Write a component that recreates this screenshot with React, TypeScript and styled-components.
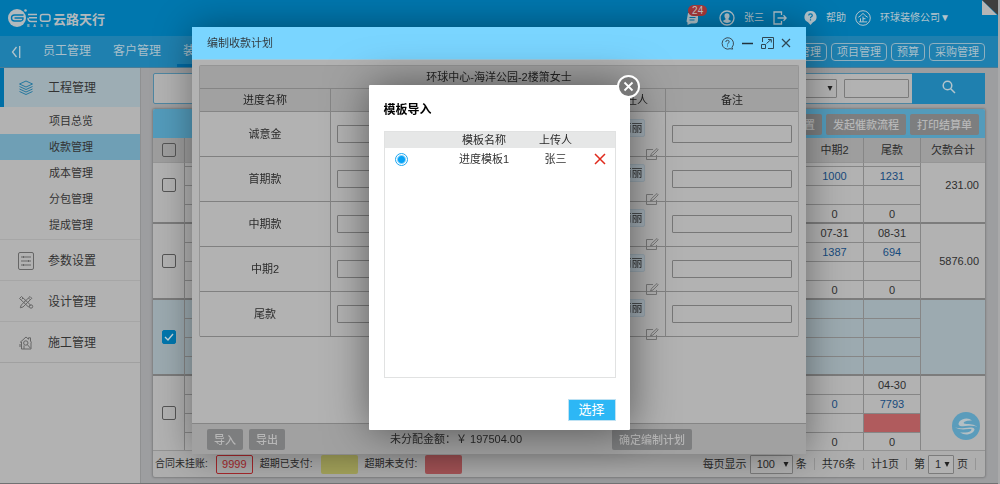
import React, { useLayoutEffect, useRef } from "react";
import styled, { createGlobalStyle } from "styled-components";

const Global = createGlobalStyle`
  *, *::before, *::after { box-sizing: border-box; }
  body {
    margin: 0;
    background: #a9a9aa;
    font-family: "Liberation Sans", "Noto Sans CJK SC", sans-serif;
    font-size: 11px;
    line-height: 16px;
    color: #2b2b2b;
  }
  button, input, select { font: inherit; color: inherit; margin: 0; }
  button { cursor: pointer; }
  a { color: inherit; text-decoration: none; }
  table { border-spacing: 0; border-collapse: separate; }
  th, td { padding: 0; font-weight: 400; }
`;

const Shell = styled.div`
  position: relative;
  display: flex;
  flex-direction: column;
  height: 100vh;
  margin-right: 2px;
  overflow: hidden;
  background: #9d9ea0;
  border-bottom: 1px solid #707172;
`;

/* ---------- top bar ---------- */
const TopBar = styled.header`
  display: flex;
  align-items: center;
  justify-content: space-between;
  flex: none;
  height: 36px;
  padding: 0 48px 0 8px;
  background: #0077ae;
  color: #b3c4cc;
  font-size: 10px;
`;
const Brand = styled.a`
  display: flex;
  align-items: center;
  gap: 2px;
  font-size: 13px;
  font-weight: 700;
  color: #b2b9bd;
`;
const BrandName = styled.span`
  padding-top: 4px;
`;
const UserTools = styled.div`
  display: flex;
  align-items: center;
  gap: 9px;
`;
const ToolButton = styled.button<{ $iconOnly?: boolean }>`
  position: relative;
  display: flex;
  align-items: center;
  gap: 9px;
  padding: 0;
  border: 0;
  background: none;
  margin-right: ${(p) => (p.$iconOnly ? 8 : 0)}px;
`;
const Badge = styled.span`
  position: absolute;
  left: 2px;
  top: -7px;
  padding: 0 4px;
  border-radius: 6px;
  background: #a83a3c;
  color: #c9c9c9;
  font-size: 10px;
  line-height: 11px;
`;
const Corner = styled.svg`
  position: absolute;
  top: 0;
  right: 0;
`;

/* ---------- navigation ---------- */
const NavBar = styled.nav`
  display: flex;
  align-items: center;
  flex: none;
  height: 32px;
  padding: 0 13px 0 11px;
  background: #1f80af;
  color: #a9bfca;
  border-bottom: 1px solid #4a7d97;
`;
const Collapse = styled.button`
  display: flex;
  padding: 0;
  border: 0;
  margin-right: 16px;
  background: none;
`;
const NavLinks = styled.div`
  display: flex;
  flex: 1;
  gap: 10px;
  height: 100%;
`;
const NavLink = styled.a<{ $active?: boolean }>`
  padding: 0 6px;
  font-size: 12px;
  line-height: 30px;
  border-bottom: 3px solid ${(p) => (p.$active ? "#0069a3" : "transparent")};
`;
const Pills = styled.div`
  display: flex;
  gap: 4px;
`;
const Pill = styled.button`
  height: 18px;
  padding: 0 5px;
  border: 1px solid #8fb0c0;
  border-radius: 4px;
  background: none;
  line-height: 16px;
`;

/* ---------- page body ---------- */
const Body = styled.div`
  display: flex;
  flex: 1;
  min-height: 0;
`;
const Side = styled.aside`
  flex: none;
  width: 141px;
  background: #b2b2b2;
  border-right: 1px solid #8f9091;
  color: #333;
`;
const SideGroup = styled.a<{ $open?: boolean }>`
  display: flex;
  align-items: center;
  gap: 14px;
  height: ${(p) => (p.$open ? 39 : 41)}px;
  padding-left: ${(p) => (p.$open ? 14 : 18)}px;
  padding-top: ${(p) => (p.$open ? 0 : 2)}px;
  border-left: ${(p) => (p.$open ? "4px solid #006fa6" : "0")};
  border-top: ${(p) => (p.$open ? "0" : "1px solid #a6a6a6")};
  background: ${(p) => (p.$open ? "#9dadb4" : "none")};
  font-size: 12px;
`;
const SideList = styled.div`
  padding: 1px 0;
`;
const SideItem = styled.a<{ $active?: boolean }>`
  display: block;
  padding-left: 49px;
  line-height: 26px;
  background: ${(p) => (p.$active ? "#6f9fb5" : "none")};
`;
const SideEnd = styled.div`
  border-top: 1px solid #a0a0a0;
`;
const Content = styled.main`
  display: flex;
  flex-direction: column;
  gap: 5px;
  flex: 1;
  min-width: 0;
  padding: 5px 13px 6px 12px;
`;
const SearchBar = styled.form`
  display: flex;
  align-items: center;
  justify-content: flex-end;
  flex: none;
  gap: 7px;
  height: 31px;
  padding-left: 8px;
  border: 1px solid #4f86a1;
  border-radius: 2px;
  background: #b2b2b2;
`;
const SelectBox = styled.label<{ $w: number }>`
  position: relative;
  display: flex;
  width: ${(p) => p.$w}px;
  height: 19px;
`;
const Select = styled.select`
  appearance: none;
  width: 100%;
  padding: 0 0 0 6px;
  border: 1px solid #7b7b7b;
  border-radius: 1px;
  background: #b2b2b2;
`;
const Arrow = styled.svg`
  position: absolute;
  right: 4px;
  top: 7px;
  pointer-events: none;
`;
const SearchInput = styled.input`
  width: 65px;
  height: 19px;
  border: 1px solid #7b7b7b;
  border-radius: 1px;
  background: #b2b2b2;
`;
const SearchButton = styled.button`
  display: flex;
  align-items: center;
  justify-content: center;
  align-self: stretch;
  width: 73px;
  padding: 0 0 4px;
  margin: -1px -1px -1px -4px;
  border: 0;
  background: #1f80af;
`;
const Card = styled.section`
  display: flex;
  flex-direction: column;
  flex: 1;
  min-height: 0;
  border-radius: 2px;
  background: #aeaeae;
  box-shadow: 0 0 2px 1px rgba(0, 0, 0, 0.2);
`;
const Actions = styled.div`
  display: flex;
  align-items: center;
  justify-content: flex-end;
  flex: none;
  gap: 4px;
  height: 29px;
  padding: 2px 6px 0 0;
  background: #539bbb;
  border-radius: 2px 2px 0 0;
`;
const GreyButton = styled.button`
  height: 21px;
  padding: 0 7px;
  border: 0;
  border-radius: 2px;
  background: #7d7e7f;
  color: #b7b7b7;
  line-height: 22px;
  font-weight: 500;
`;
const GridTable = styled.table`
  width: 100%;
  table-layout: fixed;
  background: #b2b2b2;
`;
const HeadCell = styled.th`
  height: 25px;
  background: #9e9e9e;
  border-right: 1px solid #868686;
  border-bottom: 1px solid #969696;
  text-align: center;
  &:last-child { border-right: 0; }
`;
const ScrollPane = styled.div`
  flex: 1;
  min-height: 0;
  overflow-y: auto;
  scrollbar-width: none;
`;
const Cell = styled.td<{ $last?: boolean; $tone?: Tone; $shade?: boolean }>`
  height: 19px;
  border-right: 1px solid #868686;
  border-bottom: ${(p) => (p.$last ? "2px solid #7c7c7c" : "1px solid #868686")};
  background: ${(p) => (p.$tone === "due" ? "#b05b5d" : p.$shade ? "#9caab0" : "#b2b2b2")};
  color: ${(p) => (p.$tone === "link" ? "#164a7c" : "#2e2e2e")};
  text-align: center;
  line-height: 16px;
`;
const TotalCell = styled(Cell)`
  padding-right: 6px;
  border-right: 0;
  text-align: right;
`;
const Check = styled.input`
  appearance: none;
  display: block;
  width: 14px;
  height: 14px;
  margin: 0 auto;
  border: 1px solid #555;
  border-radius: 2px;
  &:checked {
    border-color: #0077ae;
    background: #0077ae url("data:image/svg+xml,%3Csvg xmlns='http://www.w3.org/2000/svg' viewBox='0 0 12 12'%3E%3Cpath d='M2 6l3 3 5-6' fill='none' stroke='%23c5d5dc' stroke-width='1.4'/%3E%3C/svg%3E");
  }
`;
const Pager = styled.footer`
  display: flex;
  align-items: center;
  justify-content: space-between;
  flex: none;
  height: 27px;
  padding: 0 9px 0 2px;
  border-top: 1px solid #939393;
`;
const PagerGroup = styled.div<{ $gap: number }>`
  display: flex;
  align-items: center;
  gap: ${(p) => p.$gap}px;
`;
const Legend = styled.span`
  display: flex;
  align-items: center;
  gap: 8px;
  font-size: 10px;
`;
const Swatch = styled.span<{ $kind: "count" | "yellow" | "red" }>`
  width: 37px;
  height: 19px;
  border-radius: 2px;
  border: ${(p) => (p.$kind === "count" ? "1px solid #a8282c" : "0")};
  background: ${(p) => ({ count: "none", yellow: "#a6a55c", red: "#a65457" })[p.$kind]};
  color: #a8282c;
  font-size: 11px;
  line-height: 17px;
  text-align: center;
`;
const Divider = styled.span`
  width: 1px;
  height: 12px;
  background: #959595;
`;
const Floating = styled.button`
  position: absolute;
  right: 18px;
  bottom: 43px;
  display: flex;
  padding: 0;
  border: 0;
  background: none;
`;

/* ---------- dialogs ---------- */
const Layer = styled.div<{ $top: number }>`
  position: absolute;
  inset: 0;
  display: flex;
  align-items: flex-start;
  justify-content: center;
  padding-top: ${(p) => p.$top}px;
`;
const PlanDialog = styled.section`
  width: 614px;
  max-width: 100%;
  background: #b2b2b2;
  box-shadow: 1px 1px 36px rgba(0, 0, 0, 0.4);
`;
const PlanHead = styled.header`
  display: flex;
  align-items: center;
  justify-content: space-between;
  height: 33px;
  padding: 0 15px;
  background: #7ad5ff;
  border-bottom: 1px solid #9fc9dc;
  color: #333c42;
`;
const PlanTitle = styled.h2`
  margin: 0;
  font-size: 11px;
  font-weight: 400;
`;
const WindowTools = styled.div`
  display: flex;
  align-items: center;
  gap: 7px;
`;
const IconButton = styled.button`
  display: flex;
  padding: 0;
  border: 0;
  background: none;
`;
const PlanBody = styled.div`
  min-height: 363px;
  padding: 5px 7px;
`;
const PlanTable = styled.table`
  width: 100%;
  table-layout: fixed;
  border: 1px solid #959595;
  border-bottom: 0;
  border-radius: 2px;
`;
const PlanTh = styled.th`
  height: 23px;
  background: #a1a1a1;
  border-bottom: 1px solid #858585;
  border-right: 1px solid #858585;
  text-align: center;
  color: #222;
  &:last-child { border-right: 0; }
`;
const PlanTd = styled.td`
  height: 45px;
  padding: 0 6px;
  border-bottom: 1px solid #808080;
  border-right: 1px solid #858585;
  text-align: center;
  &:last-child { border-right: 0; }
`;
const PlanInput = styled.input`
  display: block;
  width: 100%;
  height: 18px;
  border: 1px solid #777;
  border-radius: 1px;
  background: none;
`;
const Owner = styled.div`
  display: flex;
  flex-direction: column;
  align-items: center;
  gap: 11px;
  height: 44px;
  padding-top: 7px;
`;
const OwnerTag = styled.span`
  height: 18px;
  padding: 0 2px;
  border: 1px solid #98a6af;
  border-radius: 2px;
  background: #a4b0b8;
`;
const EditButton = styled(IconButton)`
  align-self: flex-end;
`;
const PlanFoot = styled.footer`
  display: grid;
  grid-template-columns: 183fr 222fr 179fr;
  align-items: center;
  height: 31px;
  padding: 0 15px;
  border-top: 1px solid #858585;
  background: #a1a1a1;
  justify-items: start;
`;
const ButtonPair = styled.div`
  display: flex;
  gap: 6px;
`;
const ImportDialog = styled.section`
  position: relative;
  width: 261px;
  padding: 17px 14px 9px 15px;
  border-radius: 1px;
  background: #fff;
  box-shadow: 1px 1px 44px rgba(0, 0, 0, 0.5);
`;
const ImportTitle = styled.h2`
  margin: 0 0 13px;
  font-size: 12px;
  line-height: 16px;
  font-weight: 700;
  color: #000;
`;
const ListBox = styled.div`
  min-height: 247px;
  border: 1px solid #e1e2e2;
`;
const List = styled.table`
  width: 100%;
  table-layout: fixed;
  text-align: center;
`;
const ListTh = styled.th`
  background: #e6e7e7;
  height: 16px;
`;
const ListTd = styled.td<{ $left?: number }>`
  height: 22px;
  padding-left: ${(p) => p.$left ?? 0}px;
  color: #333;
`;
const Radio = styled.input`
  appearance: none;
  display: block;
  width: 13px;
  height: 13px;
  border: 1px solid #1ea7f0;
  border-radius: 50%;
  background: radial-gradient(circle, #08a2f5 0 3px, #fff 5px);
`;
const ImportFoot = styled.footer`
  display: flex;
  justify-content: flex-end;
  margin-top: 21px;
`;
const Choose = styled.button`
  width: 48px;
  height: 22px;
  padding: 0;
  border: 1px solid #bfe2f3;
  background: #2db7f5;
  color: #fff;
  font-size: 13px;
  line-height: 18px;
`;
const CloseRound = styled.button`
  position: absolute;
  top: -10px;
  right: -10px;
  display: flex;
  align-items: center;
  justify-content: center;
  width: 23px;
  height: 23px;
  padding: 0;
  border: 2px solid #fff;
  border-radius: 50%;
  background: #777;
`;

type Tone = "link" | "due";
type Entry = { mid?: string; end?: string; midTone?: Tone; endTone?: Tone };
type Group = { checked?: boolean; total?: string; rows: Entry[] };

const groups: Group[] = [
  {
    total: "231.00",
    rows: [{}, { mid: "1000", end: "1231", midTone: "link", endTone: "link" }, {}, { mid: "0", end: "0" }],
  },
  {
    total: "5876.00",
    rows: [
      { mid: "07-31", end: "08-31" },
      { mid: "1387", end: "694", midTone: "link", endTone: "link" },
      {},
      { mid: "0", end: "0" },
    ],
  },
  { checked: true, rows: [{}, {}, {}, {}] },
  {
    rows: [
      { end: "04-30" },
      { mid: "0", end: "7793", midTone: "link", endTone: "link" },
      { endTone: "due" },
      { mid: "0", end: "0" },
    ],
  },
];
const stages = ["诚意金", "首期款", "中期款", "中期2", "尾款"];

const GridColumns = () => (
  <colgroup>
    <col style={{ width: 32 }} />
    <col />
    <col style={{ width: 58 }} />
    <col style={{ width: 57 }} />
    <col style={{ width: 64 }} />
  </colgroup>
);

const DownArrow = () => (
  <Arrow width="6" height="5" viewBox="0 0 6 5"><path d="M0.5 0h5L3 5z" fill="#222" /></Arrow>
);

const Logo = () => (
  <svg width="43" height="20" viewBox="0 0 43 20" fill="none">
    <circle cx="9" cy="10" r="9" fill="#b2b9bd" />
    <path d="M15.500 7H6.500a3 3 0 0 0 0 6h6a2.500 2.500 0 0 0 2.500-3H6.500" stroke="#0077ae" strokeWidth="1.400" />
    <circle cx="17.500" cy="2.500" r="1.300" fill="#b2b9bd" />
    <path d="M20 6.500h9M21 9.800h8M20 9.800q0 3.700 3 3.700h6" stroke="#b2b9bd" strokeWidth="1.500" />
    <rect x="32.500" y="6.500" width="9.500" height="6.700" rx="2" stroke="#b2b9bd" strokeWidth="1.500" />
    <text x="19 25 32 38" y="18.500" fill="#b2b9bd" fontSize="4" fontWeight="700">EASE</text>
  </svg>
);

export default function App() {
  const pane = useRef<HTMLDivElement>(null);
  useLayoutEffect(() => {
    if (pane.current) pane.current.scrollTop = 15;
  }, []);

  return (
    <>
      <Global />
      <Shell>
        <TopBar>
          <Brand href="#"><Logo /><BrandName>云路天行</BrandName></Brand>
          <UserTools>
            <ToolButton aria-label="消息" $iconOnly>
              <svg width="16" height="13" viewBox="0 0 16 13">
                <path d="M2 1h10v7q0 3.500-3.500 3.500H5L1.500 13v-2.500L.5 9.500z" fill="#b3c4cc" />
                <path d="M3.500 5.500h6M3.500 8h5" stroke="#0077ae" />
              </svg>
              <Badge>24</Badge>
            </ToolButton>
            <ToolButton>
              <svg width="16" height="16" viewBox="0 0 16 16" fill="none" stroke="#b3c4cc" strokeWidth="1.300">
                <circle cx="8" cy="8" r="7" />
                <path d="M8 3.200c2.200 0 2.700 1.600 2.500 3.200-.1 1-.6 1.700-1 2.200v1l2.800 1.300Q10.500 13 8 13t-4.300-2.100l2.800-1.300v-1c-.4-.5-.9-1.200-1-2.200C5.300 4.800 5.800 3.200 8 3.200z" fill="#b3c4cc" stroke="none" />
              </svg>
              张三
            </ToolButton>
            <ToolButton aria-label="退出" $iconOnly>
              <svg width="14" height="14" viewBox="0 0 14 14" fill="none" stroke="#b3c4cc" strokeWidth="1.300">
                <path d="M8.500 4V1H1v12h7.500v-3M4.500 7h8.500M10.500 4.300L13.200 7l-2.700 2.700" />
              </svg>
            </ToolButton>
            <ToolButton>
              <svg width="13" height="14" viewBox="0 0 13 14">
                <path d="M6.500 0a5.900 5.900 0 0 1 2.500 11.300L6.500 14 4 11.300A5.900 5.900 0 0 1 6.500 0z" fill="#b3c4cc" />
                <path d="M4.700 4.600q0-1.800 1.800-1.800t1.800 1.600q0 .9-1 1.400-.8.400-.8 1.500M6.500 8.300v1.300" stroke="#0077ae" strokeWidth="1.200" fill="none" />
              </svg>
              帮助
            </ToolButton>
            <ToolButton>
              <svg width="16" height="16" viewBox="0 0 16 16" fill="none" stroke="#b3c4cc">
                <circle cx="8" cy="8" r="7.300" />
                <path d="M3.300 7.300Q6 6 8 3.300 10 6 12.700 7.300M8 6.500v5.300M8 8.700h2.500M5.500 8.300v3.500M3.800 11.900h8.400" />
              </svg>
              <span>环球装修公司▼</span>
            </ToolButton>
          </UserTools>
          <Corner width="16" height="15" viewBox="0 0 16 15">
            <path d="M0 0v15h15z" fill="#b5b5b5" />
            <path d="M0 0h16v15z" fill="#3e3e3e" />
          </Corner>
        </TopBar>

        <NavBar>
          <Collapse aria-label="收起">
            <svg width="10" height="12" viewBox="0 0 10 12" fill="none" stroke="#b3c4cc" strokeWidth="1.300">
              <path d="M5.500 1L1.500 6l4 5M8.700 0v12" />
            </svg>
          </Collapse>
          <NavLinks>
            <NavLink href="#">员工管理</NavLink>
            <NavLink href="#">客户管理</NavLink>
            <NavLink href="#" $active>装修</NavLink>
          </NavLinks>
          <Pills>
            <Pill>收款管理</Pill>
            <Pill>项目管理</Pill>
            <Pill>预算</Pill>
            <Pill>采购管理</Pill>
          </Pills>
        </NavBar>

        <Body>
          <Side>
            <SideGroup href="#" $open>
              <svg width="16" height="16" viewBox="0 0 16 16" fill="none" stroke="#26789f">
                <path d="M8 1l6.500 3L8 7 1.500 4zM1.500 6.500L8 9.500l6.500-3M1.500 9L8 12l6.500-3M1.500 11.500L8 14.500l6.500-3" />
              </svg>
              工程管理
            </SideGroup>
            <SideList>
              <SideItem href="#">项目总览</SideItem>
              <SideItem href="#" $active>收款管理</SideItem>
              <SideItem href="#">成本管理</SideItem>
              <SideItem href="#">分包管理</SideItem>
              <SideItem href="#">提成管理</SideItem>
            </SideList>
            <SideGroup href="#">
              <svg width="16" height="18" viewBox="0 0 16 18" fill="none" stroke="#666">
                <rect x="0.500" y="0.500" width="15" height="17" rx="1.500" />
                <path d="M3 5h10M3 9h10M3 13h10M5.500 4v2M10.500 8v2M5.500 12v2" />
              </svg>
              参数设置
            </SideGroup>
            <SideGroup href="#">
              <svg width="16" height="14" viewBox="0 0 16 14" fill="none" stroke="#666">
                <path d="M1.500 3.500l2-2 9 8.500-2 2zM5 3l-1.300 1.300M7.500 5.300L6.200 6.600M12 1.500l1.800 1.800L5 12l-2.700.8.800-2.600zM10.500 3l1.800 1.800" />
                <circle cx="13" cy="11.500" r="1.700" />
              </svg>
              设计管理
            </SideGroup>
            <SideGroup href="#">
              <svg width="16" height="14" viewBox="0 0 16 14" fill="none" stroke="#666">
                <path d="M2 6.500L8 1l2.500 2.200V1.800h2V5l1 1.500M3.500 6v7h9.500V6.500M2 8v3" />
                <circle cx="7.800" cy="7" r="2.200" />
                <path d="M9.300 8.600l3 3.400M6 9.500V13" />
              </svg>
              施工管理
            </SideGroup>
            <SideEnd />
          </Side>

          <Content>
            <SearchBar>
              <SelectBox $w={70}>
                <Select aria-label="状态"><option></option></Select>
                <DownArrow />
              </SelectBox>
              <SearchInput aria-label="关键字" />
              <SearchButton aria-label="搜索">
                <svg width="14" height="14" viewBox="0 0 14 14" fill="none" stroke="#b3c4cc" strokeWidth="1.500">
                  <circle cx="5.500" cy="5.500" r="4.300" /><path d="M8.700 8.700l4.300 4.300" />
                </svg>
              </SearchButton>
            </SearchBar>

            <Card>
              <Actions>
                <GreyButton>批量设置</GreyButton>
                <GreyButton>发起催款流程</GreyButton>
                <GreyButton>打印结算单</GreyButton>
              </Actions>
              <GridTable>
                <GridColumns />
                <thead>
                  <tr>
                    <HeadCell><Check type="checkbox" aria-label="全选" /></HeadCell>
                    <HeadCell />
                    <HeadCell>中期2</HeadCell>
                    <HeadCell>尾款</HeadCell>
                    <HeadCell>欠款合计</HeadCell>
                  </tr>
                </thead>
              </GridTable>
              <ScrollPane ref={pane}>
                <GridTable>
                  <GridColumns />
                  <tbody>
                    {groups.map((g, gi) =>
                      g.rows.map((row, i) => (
                        <tr key={`${gi}-${i}`}>
                          {i === 0 && (
                            <Cell rowSpan={4} $last $shade={g.checked}>
                              <Check type="checkbox" aria-label={`选择第${gi + 1}行`} defaultChecked={g.checked} />
                            </Cell>
                          )}
                          <Cell $last={i === 3} $shade={g.checked} />
                          <Cell $last={i === 3} $shade={g.checked} $tone={row.midTone}>{row.mid}</Cell>
                          <Cell $last={i === 3} $shade={g.checked} $tone={row.endTone}>{row.end}</Cell>
                          {i === 0 && <TotalCell rowSpan={4} $last $shade={g.checked}>{g.total}</TotalCell>}
                        </tr>
                      ))
                    )}
                  </tbody>
                </GridTable>
              </ScrollPane>
              <Pager>
                <PagerGroup $gap={7}>
                  <Legend>合同未挂账: <Swatch $kind="count">9999</Swatch></Legend>
                  <Legend>超期已支付: <Swatch $kind="yellow" /></Legend>
                  <Legend>超期未支付: <Swatch $kind="red" /></Legend>
                </PagerGroup>
                <PagerGroup $gap={7}>
                  <PagerGroup $gap={3}>
                    每页显示
                    <SelectBox $w={43}>
                      <Select aria-label="每页显示"><option>100</option></Select>
                      <DownArrow />
                    </SelectBox>
                    条
                  </PagerGroup>
                  <Divider />
                  共76条
                  <Divider />
                  计1页
                  <Divider />
                  <PagerGroup $gap={3}>
                    第
                    <SelectBox $w={26}>
                      <Select aria-label="页码"><option>1</option></Select>
                      <DownArrow />
                    </SelectBox>
                    页
                  </PagerGroup>
                  <Divider />
                </PagerGroup>
              </Pager>
            </Card>
          </Content>
        </Body>

        <Floating aria-label="客服">
          <svg width="28" height="28" viewBox="0 0 28 28">
            <circle cx="14" cy="14" r="14" fill="#5b9cbb" />
            <path d="M20 8.500Q17 6 12.500 6.800 7.500 8 6.500 11.500q-.3 2.300 3 2.700 3 .2 7-.4 5-.4 9 1-4-3-9-2.900-3.500.2-4.500-.3-1-.7.500-1.800Q15 8.300 20 8.500z" fill="#b4bfc4" />
            <path d="M3 15.500q5 2.500 10.500 1.800 4-.6 5.500-.2 1.300.6-.3 1.900Q16 21 8 20.500q4 2.600 8.500 1.800 5-1.200 6-4.500.2-2-3-2.300-3-.2-7 .4-5 .6-9.500-.4z" fill="#b4bfc4" />
          </svg>
        </Floating>

        <Layer $top={27}>
          <PlanDialog role="dialog" aria-label="编制收款计划">
            <PlanHead>
              <PlanTitle>编制收款计划</PlanTitle>
              <WindowTools>
                <IconButton aria-label="帮助">
                  <svg width="13" height="13" viewBox="0 0 13 13" fill="none" stroke="#3a4c58">
                    <path d="M11 10.300A5.700 5.700 0 1 0 9 11.700l2.700.4z" />
                    <path d="M4.800 5q0-1.700 1.700-1.700T8.200 4.900q0 .8-.9 1.200-.8.400-.8 1.400M6.500 8.500v1" />
                  </svg>
                </IconButton>
                <IconButton aria-label="最小化">
                  <svg width="13" height="12" viewBox="0 0 13 12"><path d="M1 6.500h11" stroke="#22323c" strokeWidth="1.500" /></svg>
                </IconButton>
                <IconButton aria-label="最大化">
                  <svg width="13" height="12" viewBox="0 0 13 12" fill="none" stroke="#2f4754">
                    <path d="M1.500 5V.5h11v11H7M.5 7.500h4v4h-4zM5.500 6.500l4.500-4M7 2.500h3.300v3" />
                  </svg>
                </IconButton>
                <IconButton aria-label="关闭">
                  <svg width="10" height="12" viewBox="0 0 10 12"><path d="M1 2l8 8M9 2l-8 8" stroke="#2f4754" strokeWidth="1.200" /></svg>
                </IconButton>
              </WindowTools>
            </PlanHead>
            <PlanBody>
              <PlanTable>
                <colgroup>
                  <col style={{ width: 131 }} />
                  <col />
                  <col />
                  <col style={{ width: 68 }} />
                  <col style={{ width: 132 }} />
                </colgroup>
                <thead>
                  <tr><PlanTh colSpan={5}>环球中心-海洋公园-2楼箫女士</PlanTh></tr>
                  <tr>
                    <PlanTh>进度名称</PlanTh>
                    <PlanTh />
                    <PlanTh />
                    <PlanTh>责任人</PlanTh>
                    <PlanTh>备注</PlanTh>
                  </tr>
                </thead>
                <tbody>
                  {stages.map((s) => (
                    <tr key={s}>
                      <PlanTd>{s}</PlanTd>
                      <PlanTd><PlanInput aria-label={`${s}收款日期`} /></PlanTd>
                      <PlanTd><PlanInput aria-label={`${s}收款金额`} /></PlanTd>
                      <PlanTd>
                        <Owner>
                          <OwnerTag>丽丽</OwnerTag>
                          <EditButton aria-label={`修改${s}责任人`}>
                            <svg width="13" height="12" viewBox="0 0 13 12" fill="none" stroke="#777">
                              <path d="M7 1.500H.5v10h10V7M4.500 8l1-2.500L11 .5l1.200 1.300L7 7z" />
                            </svg>
                          </EditButton>
                        </Owner>
                      </PlanTd>
                      <PlanTd><PlanInput aria-label={`${s}备注`} /></PlanTd>
                    </tr>
                  ))}
                </tbody>
              </PlanTable>
            </PlanBody>
            <PlanFoot>
              <ButtonPair>
                <GreyButton>导入</GreyButton>
                <GreyButton>导出</GreyButton>
              </ButtonPair>
              <span>未分配金额：￥ 197504.00</span>
              <GreyButton>确定编制计划</GreyButton>
            </PlanFoot>
          </PlanDialog>
        </Layer>

        <Layer $top={85}>
          <ImportDialog role="dialog" aria-label="模板导入">
            <CloseRound aria-label="关闭">
              <svg width="11" height="11" viewBox="0 0 11 11"><path d="M1.500 1.500l8 8M9.500 1.500l-8 8" stroke="#fff" strokeWidth="1.800" /></svg>
            </CloseRound>
            <ImportTitle>模板导入</ImportTitle>
            <ListBox>
              <List>
                <colgroup>
                  <col style={{ width: 64 }} />
                  <col style={{ width: 71 }} />
                  <col style={{ width: 72 }} />
                  <col />
                </colgroup>
                <thead>
                  <tr><ListTh /><ListTh>模板名称</ListTh><ListTh>上传人</ListTh><ListTh /></tr>
                </thead>
                <tbody>
                  <tr>
                    <ListTd $left={10}><Radio type="radio" name="template" aria-label="进度模板1" defaultChecked /></ListTd>
                    <ListTd>进度模板1</ListTd>
                    <ListTd>张三</ListTd>
                    <ListTd $left={2}>
                      <IconButton aria-label="删除">
                        <svg width="12" height="12" viewBox="0 0 12 12"><path d="M1 1l10 10M11 1L1 11" stroke="#e02a1c" strokeWidth="1.500" /></svg>
                      </IconButton>
                    </ListTd>
                  </tr>
                </tbody>
              </List>
            </ListBox>
            <ImportFoot><Choose>选择</Choose></ImportFoot>
          </ImportDialog>
        </Layer>
      </Shell>
    </>
  );
}
